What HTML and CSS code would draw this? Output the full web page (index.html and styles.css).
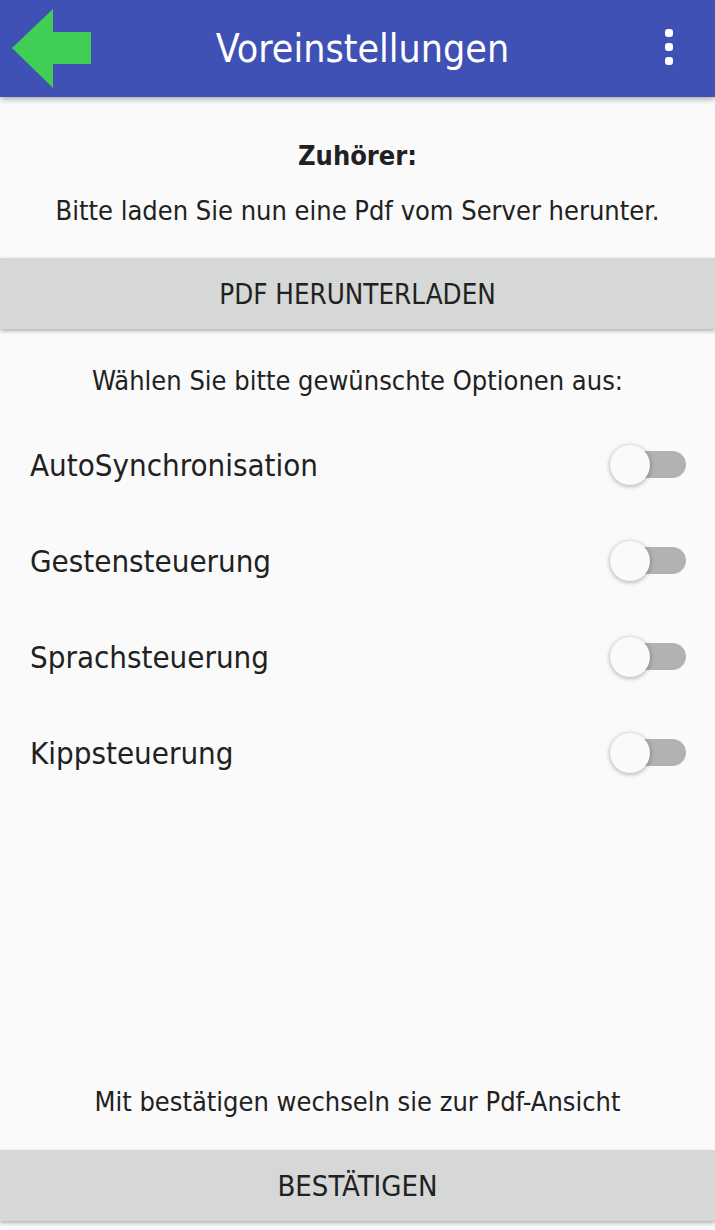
FILE: index.html
```html
<!DOCTYPE html>
<html lang="de">
<head>
<meta charset="utf-8">
<title>Voreinstellungen</title>
<link rel="stylesheet" href="styles.css">
</head>
<body>
<div class="app">
  <header class="toolbar">
    <svg class="back" width="80" height="80" viewBox="0 0 80 80" aria-label="Zurück">
      <polygon points="0,39 41,0 41,23 79,23 79,55 41,55 41,79" fill="#40CE55"/>
    </svg>
    <h1 class="title">Voreinstellungen</h1>
    <div class="menu" aria-label="Menü">
      <span class="dot"></span><span class="dot"></span><span class="dot"></span>
    </div>
  </header>
  <main class="content">
    <p class="heading">Zuhörer:</p>
    <p class="info">Bitte laden Sie nun eine Pdf vom Server herunter.</p>
    <button class="btn btn-download">PDF HERUNTERLADEN</button>
    <p class="prompt">Wählen Sie bitte gewünschte Optionen aus:</p>
    <ul class="options">
      <li class="option"><span class="label">AutoSynchronisation</span><span class="switch"><span class="track"></span><span class="thumb"></span></span></li>
      <li class="option"><span class="label">Gestensteuerung</span><span class="switch"><span class="track"></span><span class="thumb"></span></span></li>
      <li class="option"><span class="label">Sprachsteuerung</span><span class="switch"><span class="track"></span><span class="thumb"></span></span></li>
      <li class="option"><span class="label">Kippsteuerung</span><span class="switch"><span class="track"></span><span class="thumb"></span></span></li>
    </ul>
    <div class="spacer"></div>
    <p class="footnote">Mit bestätigen wechseln sie zur Pdf-Ansicht</p>
    <button class="btn btn-confirm">BESTÄTIGEN</button>
  </main>
</div>
</body>
</html>
```
FILE: styles.css
```css
* { box-sizing: border-box; }
html, body {
  margin: 0;
  padding: 0;
  height: 100%;
  background: #FAFAFA;
  font-family: "DejaVu Sans", "Liberation Sans", sans-serif;
  font-stretch: condensed;
  color: #212121;
}
.app {
  display: flex;
  flex-direction: column;
  height: 1230px;
}
.toolbar {
  position: relative;
  z-index: 2;
  height: 97px;
  flex: 0 0 97px;
  background: #3F51B5;
  box-shadow: 0 2px 6px rgba(0,0,0,0.35);
  display: flex;
  align-items: center;
  padding: 0 0 0 12px;
}
.back { display: block; flex: 0 0 80px; }
.title {
  flex: 1;
  margin: 0;
  text-align: center;
  color: #fff;
  font-weight: normal;
  font-size: 39px;
  line-height: 46px;
  padding-right: 18px;
}
.menu {
  flex: 0 0 64px;
  display: flex;
  flex-direction: column;
  align-items: center;
  gap: 6px;
  padding-right: 28px;
  margin-bottom: 4px;
}
.dot {
  width: 8px; height: 8px; border-radius: 3px;
  background: #fff;
}
.content {
  flex: 1;
  display: flex;
  flex-direction: column;
}
.heading {
  margin: 43px 0 0;
  text-align: center;
  font-weight: bold;
  font-size: 27px;
  line-height: 32px;
}
.info {
  margin: 23px 0 0;
  text-align: center;
  font-size: 27px;
  line-height: 32px;
}
.btn {
  display: block;
  width: 100%;
  height: 71px;
  border: 0;
  background: #D6D7D7;
  box-shadow: 0 2px 4px rgba(0,0,0,0.3);
  font-family: inherit;
  font-stretch: condensed;
  font-size: 27.5px;
  color: #212121;
  text-align: center;
  padding: 0;
}
.btn-download { margin-top: 31px; }
.prompt {
  margin: 36px 0 0;
  text-align: center;
  font-size: 27px;
  line-height: 32px;
}
.options {
  list-style: none;
  margin: 20px 0 0;
  padding: 0;
}
.option {
  height: 96px;
  display: flex;
  align-items: center;
  justify-content: space-between;
  padding: 0 29px 0 30px;
}
.label {
  font-size: 31px;
}
.switch {
  position: relative;
  width: 76px;
  height: 40px;
}
.track {
  position: absolute;
  left: 8px; right: 0; top: 6px;
  height: 27px;
  border-radius: 14px;
  background: #B2B2B2;
}
.thumb {
  position: absolute;
  left: 0; top: 0;
  width: 40px; height: 40px;
  border-radius: 50%;
  background: #FAFAFA;
  box-shadow: 0 1px 5px rgba(0,0,0,0.35);
}
.spacer { flex: 1; }
.footnote {
  margin: 0;
  text-align: center;
  font-size: 27px;
  line-height: 32px;
}
.btn-confirm { margin: 32px 0 9px; font-size: 29px; }
```
